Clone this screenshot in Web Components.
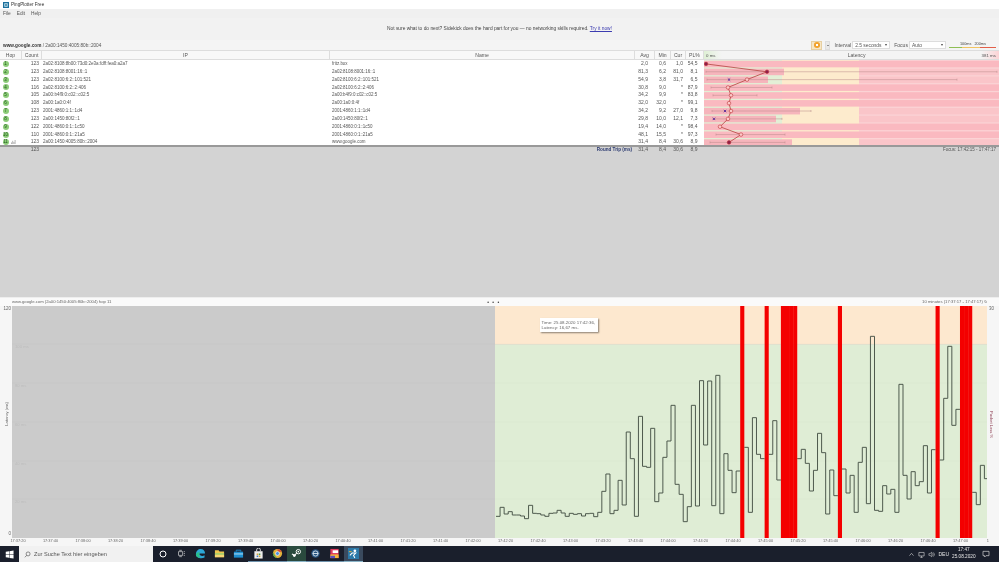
<!DOCTYPE html>
<html lang="en"><head><meta charset="utf-8"><title>PingPlotter Free</title>
<style>html,body{margin:0;padding:0;background:#d3d3d3;overflow:hidden}</style></head>
<body>
<pp-app>
  <pp-titlebar>PingPlotter Free</pp-titlebar>
  <pp-menu></pp-menu>
  <pp-banner>Not sure what to do next? Sidekick does the hard part for you — no networking skills required. <a>Try it now!</a></pp-banner>
  <pp-toolbar></pp-toolbar>
  <pp-table></pp-table>
  <pp-chart></pp-chart>
  <pp-taskbar></pp-taskbar>
</pp-app>
<script>
const FONT='"Liberation Sans",Arial,sans-serif';
class Base extends HTMLElement{
  render(css,html){const s=this.attachShadow({mode:'open'});s.innerHTML=`<style>:host{display:block;box-sizing:border-box;font-family:${FONT}}*{box-sizing:border-box}${css}</style>${html}`;return s;}
}
customElements.define('pp-app',class extends Base{connectedCallback(){this.render(`:host{width:999px;height:562px;display:flex;flex-direction:column;overflow:hidden;filter:blur(.35px)}`,`<slot></slot>`)}});
customElements.define('pp-titlebar',class extends Base{connectedCallback(){this.render(`:host{height:9px;background:#fff;display:flex;align-items:center;gap:2px;padding-left:3px;font-size:4.6px;color:#333}svg{width:6px;height:6px}`,
`<svg viewBox="0 0 12 12"><rect width="12" height="12" fill="#1c6f9c"/><rect x="2.5" y="2.5" width="7" height="7" fill="#bfe3ee"/><rect x="4.5" y="4.5" width="3" height="3" fill="#145a80"/></svg><slot></slot>`)}});
customElements.define('pp-menu',class extends Base{connectedCallback(){this.render(`:host{height:9px;background:#f0f0f0;display:flex;align-items:center;gap:6px;padding-left:3px;font-size:4.8px;color:#555}`,
`<span>File</span><span>Edit</span><span>Help</span>`)}});
customElements.define('pp-banner',class extends Base{connectedCallback(){this.render(`:host{height:22px;background:#f2f2f2;display:flex;align-items:flex-start;justify-content:center;padding-top:7px;font-size:4.85px;line-height:7px;color:#444;white-space:pre}
::slotted(a){color:#3b3bb0;text-decoration:underline}`,`<slot></slot>`)}});
customElements.define('pp-select',class extends Base{connectedCallback(){const w=this.getAttribute('w');this.render(`:host{width:${w}px;height:8.5px;background:#fff;border:.5px solid #ddd;display:flex;align-items:center;justify-content:space-between;padding:0 2px;font-size:4.9px;color:#555}i{border:1.5px solid transparent;border-top:2px solid #444;border-bottom:0}`,`<slot></slot><i></i>`)}});
customElements.define('pp-toolbar',class extends Base{connectedCallback(){this.render(`:host{height:11px;background:#f4f4f4;display:flex;align-items:center;padding-left:3px;font-size:4.7px;color:#555;border-bottom:.5px solid #ddd}
.host{font-weight:700;color:#333}.sp{flex:1}
.pause{width:11px;height:9px;background:#f6e6c6;border:.5px solid #e7cfa0;display:flex;align-items:center;justify-content:center}
.pause b{width:5.5px;height:5.5px;border-radius:50%;background:#f2a32e;display:flex;gap:.6px;align-items:center;justify-content:center}
.pause b i{width:.7px;height:2.5px;background:#fff}
.dd{width:5px;height:9px;margin:0 4px 0 3px;background:#e9e9e9;border:.5px solid #ddd;display:flex;align-items:center;justify-content:center}
.dd i{border:1.2px solid transparent;border-top:1.6px solid #333;border-bottom:0}
.lbl{margin-right:1px;font-size:5.1px}.gap{width:4px}
.legend{width:50px;margin-left:3px;display:flex;flex-direction:column;height:10px;justify-content:center}
.lt{display:flex;font-size:3.8px;line-height:5px;color:#444;padding-left:11px;gap:3px}
.lb{display:flex;height:1.5px;width:47px}.lb i{display:block;height:100%}`,
`<span><span class="host">www.google.com</span> / 2a00:1450:4005:80b::2004</span><span class="sp"></span>
<div class="pause"><b><i></i><i></i></b></div><div class="dd"><i></i></div>
<span class="lbl">Interval</span><pp-select w="38">2.5 seconds</pp-select><span class="gap"></span>
<span class="lbl">Focus</span><pp-select w="37">Auto</pp-select>
<div class="legend"><div class="lt"><span>100ms</span><span>200ms</span></div><div class="lb"><i style="width:13px;background:#8fbf55"></i><i style="width:18px;background:#f2c462"></i><i style="width:16px;background:#e2604a"></i></div></div>`)}});

const ROWS=[
[1,123,'2a02:8108:8b00:73d0:2e3a:fdff:fea0:a2a7','fritz.box','2,0','0,6','1,0','54,5'],
[2,123,'2a02:8108:8001:16::1','2a02:8108:8001:16::1','81,3','6,2','81,0','8,1'],
[3,123,'2a02:8100:6:2::101:521','2a02:8100:6:2::101:521','54,9','3,8','31,7','6,5'],
[4,116,'2a02:8100:6:2::2:406','2a02:8100:6:2::2:406','30,8','9,0','*','87,9'],
[5,105,'2a00:b4f9:0:c02::c02:5','2a00:b4f9:0:c02::c02:5','34,2','9,9','*','83,8'],
[6,108,'2a00:1a0:0:4f','2a00:1a0:0:4f','32,0','32,0','*','99,1'],
[7,123,'2001:4860:1:1::1d4','2001:4860:1:1::1d4','34,2','9,2','27,0','9,8'],
[8,123,'2a00:1450:80f2::1','2a00:1450:80f2::1','29,8','10,0','12,1','7,3'],
[9,122,'2001:4860:0:1::1c50','2001:4860:0:1::1c50','19,4','14,0','*','98,4'],
[10,110,'2001:4860:0:1::21a5','2001:4860:0:1::21a5','48,1','15,5','*','97,3'],
[11,123,'2a00:1450:4005:80b::2004','www.google.com','31,4','8,4','30,6','8,9']];
const LAT=[
{avg:706,cur:706,full:1},
{avg:767,cur:767,bar:784,e:[706,997]},
{avg:747,cur:729,bar:768,e:[707,957]},
{avg:728,full:1,e:[711,772]},
{avg:731,full:1,e:[713,757]},
{avg:729,full:1},
{avg:731,cur:725,bar:800,e:[712,811]},
{avg:728,cur:714,bar:776,e:[713,782]},
{avg:720,full:1},
{avg:741,full:1,e:[716,785]},
{avg:729,cur:728,bar:792,e:[710,785]}];
const RH=7.85;
function latencySvg(){
  let s='';
  const X=x=>x-704;
  s+=`<rect x="0" y="0" width="78" height="87" fill="#e3efd6"/><rect x="78" y="0" width="77" height="87" fill="#fdebcd"/><rect x="155" y="0" width="140" height="87" fill="#fbd3d5"/>`;
  LAT.forEach((r,i)=>{const y=i*RH+.8,h=RH-1.3;
    if(r.full)s+=`<rect x="0" y="${y}" width="295" height="${h}" fill="#fab9c0"/>`;
    else{s+=`<rect x="0" y="${y}" width="${X(r.bar)}" height="${h}" fill="#f6b5bc"/>`;
      s+=`<rect x="155" y="${y}" width="140" height="${h}" fill="#fab9c0" opacity=".55"/>`;}
  });
  LAT.forEach((r,i)=>{if(r.e){const y=i*RH+RH/2;s+=`<path d="M${X(r.e[0])} ${y}H${X(r.e[1])}M${X(r.e[0])} ${y-1}v2M${X(r.e[1])} ${y-1}v2" stroke="#b98a8a" stroke-width=".5" fill="none"/>`}});
  s+=`<polyline fill="none" stroke="#b4423f" stroke-width=".8" points="${LAT.map((r,i)=>X(r.avg)+','+(i*RH+RH/2)).join(' ')}"/>`;
  LAT.forEach((r,i)=>{const y=i*RH+RH/2;
    const dark=(i==0||i==1||i==10);
    s+=`<circle cx="${X(r.avg)}" cy="${y}" r="1.8" fill="${dark?'#8f1f4a':'#fbc8c8'}" stroke="#c0393b" stroke-width=".6"/>`;
    if(r.cur&&!dark)s+=`<path d="M${X(r.cur)-1.2} ${y-1.2}l2.4 2.4M${X(r.cur)+1.2} ${y-1.2}l-2.4 2.4" stroke="#5a2a96" stroke-width=".9"/>`;
  });
  return `<svg class="lat" viewBox="0 0 295 86.35" width="295" height="86.35">${s}</svg>`;
}
customElements.define('pp-table',class extends Base{connectedCallback(){
  const cell=(c,t)=>`<span class="${c}">${t}</span>`;
  const rows=ROWS.map((r,i)=>`<div class="row"><span class="hop"><b>${r[0]}</b>${i==10?'<svg viewBox="0 0 6 5" width="5" height="4"><path d="M.5 5V3M2 5V1M3.5 5V2.5M5 5V0" stroke="#666" stroke-width=".6"/></svg>':''}</span>${cell('cnt r',r[1])}${cell('ip',r[2])}${cell('nm',r[3])}${cell('avg r',r[4])}${cell('min r',r[5])}${cell('cur r',r[6])}${cell('pl r',r[7])}</div>`).join('');
  this.render(`:host{flex:1;display:flex;flex-direction:column;background:#d3d3d3;font-size:5.1px;color:#555;min-height:0}
.hd{display:flex;height:9px;background:#f8f8f8;border-bottom:.5px solid #ddd;color:#555}
.hd>span{display:flex;align-items:center;justify-content:center;border-right:.5px solid #ddd}
.latH{width:295px;background:linear-gradient(90deg,#dff0d5 0,#f4f4f4 6%,#f4f4f4 94%,#fbd3d5 100%);display:flex;align-items:center;justify-content:space-between;font-size:4.4px;padding:0 3px 0 2px}
.latH span:nth-child(2){font-size:5.1px;margin-left:16px}
.body{display:flex;height:86.35px;background:#fff}
.rows{width:704px}
.row{display:flex;height:7.85px;line-height:7.85px;white-space:nowrap;font-size:5px}
.hop{width:22px;display:flex;align-items:center;gap:2px;padding-left:2.5px}
.hop b{width:6px;height:6px;border-radius:50%;background:#8ccb78;color:#1f5a1a;font-weight:400;font-size:4.5px;display:flex;align-items:center;justify-content:center;flex:none}
.cnt{width:20px;padding-right:3px}.ip{width:288px;padding-left:1px;font-size:4.55px}.nm{width:305px;padding-left:2px;font-size:4.45px}
.avg{width:20px;padding-right:7px}.min{width:16px;padding-right:5px}.cur{width:15px;padding-right:3px}.pl{width:18px;padding-right:6.5px}
.r{text-align:right}
.lat{display:block}
.sep{height:1.5px;background:#999;margin-top:-.9px}
.ft{display:flex;height:5.5px;line-height:5.5px;white-space:nowrap;background:#d3d3d3;font-size:5px;align-items:baseline}
.rt{font-weight:700;color:#2b3a70;width:305px;text-align:right;padding-right:3px;font-size:4.6px}
.focus{flex:1;text-align:right;padding-right:3px;font-size:4.45px}
.rest{flex:1;background:#d3d3d3}`,
`<div class="hd"><span style="width:22px">Hop</span><span style="width:20px">Count</span><span style="width:288px">IP</span><span style="width:305px">Name</span><span style="width:20px">Avg</span><span style="width:16px">Min</span><span style="width:15px">Cur</span><span style="width:18px">PL%</span><div class="latH"><span>0 ms</span><span>Latency</span><span>381 ms</span></div></div>
<div class="body"><div class="rows">${rows}</div>${latencySvg()}</div><div class="sep"></div>
<div class="ft"><span class="hop"></span><span class="cnt r">123</span><span class="ip"></span><span class="rt">Round Trip (ms)</span><span class="avg r">31,4</span><span class="min r">8,4</span><span class="cur r">30,6</span><span class="pl r">8,9</span><span class="focus">Focus: 17:42:15 - 17:47:17</span></div>
<div class="rest"></div>`)}});

const V=[664,637,657,650,660,660,663,671,631,655,656,660,664,655,654,646,654,664,655,658,656,663,656,655,665,652,589,537,656,646,556,630,411,491,664,364,514,517,400,620,594,487,438,331,568,598,680,635,331,633,257,450,258,632,241,656,476,526,593,528,
null,457,652,368,478,491,null,478,377,555,null,null,null,null,491,463,505,588,526,415,473,657,525,602,null,522,594,541,652,502,457,626,124,646,649,572,597,583,652,268,541,612,530,572,560,452,594,464,null,495,310,154,391,343,null,null,null,592,629,511,551];
customElements.define('pp-chart',class extends Base{connectedCallback(){
  const PX=x=>+(x-12).toFixed(2), PY=z=>+(295+z/3-306).toFixed(2), STEP=4.07, X0=496;
  let d='',reds='',prev=null;
  V.forEach((v,i)=>{const a=PX(X0+i*STEP),b=PX(X0+(i+1)*STEP);
    if(v===null){reds+=`<rect x="${a}" y="0" width="${STEP+.05}" height="232" fill="#f40000"/>`;prev=null;return;}
    const y=PY(v);
    d+=(prev===null?`M${a} ${y}`:`V${y}`)+`H${b}`;prev=v;
  });
  const grid=[38,77,116,155,193].map(y=>`<path d="M0 ${y}H975" stroke="#000" stroke-opacity=".03" stroke-width=".7"/>`).join('');
  const gl=[[100,40.5],[80,79.5],[60,118.5],[40,157.5],[20,195.5]].map(([t,y])=>`<text x="3" y="${y+1.5}" font-size="4.2" fill="#bdbdbd" font-family='${FONT}'>${t} ms</text>`).join('');
  const labels=[];for(let s=37*60+20;s<=47*60;s+=20){const m=Math.floor(s/60),ss=s%60;labels.push(`17:${m}:${String(ss).padStart(2,'0')}`)}
  this.render(`:host{height:249px;flex:none;display:flex;flex-direction:column;background:#f6f6f6;font-size:4.2px;color:#666;border-top:1px solid #eee}
.head{height:8px;display:flex;justify-content:space-between;align-items:center;padding:0 12px 0 12px;background:#fafafa;white-space:nowrap;line-height:8px}
.dots{letter-spacing:1px;color:#444;font-weight:700;font-size:5px;margin-left:-46px}
.mid{height:232px;display:flex}
.gut{width:12px;display:flex;flex-direction:column;justify-content:space-between;align-items:flex-end;padding-right:1px;font-size:4.5px}
.gut.r{align-items:flex-start;padding:0 0 0 2px;flex:1}
.v{writing-mode:vertical-rl;transform:rotate(180deg);font-size:4.1px;margin-right:2px;margin-bottom:14px}
.v.pk{transform:none;color:#8c3b50;margin:0}
.plot{width:975px;position:relative;border-left:1.5px solid #aaa;height:232px}
svg{display:block;position:absolute;left:-1.5px;top:0}
.tip{position:absolute;left:527px;top:12px;width:58px;height:14px;background:#fff;box-shadow:1px 1px 1.5px rgba(0,0,0,.45);font-size:4.4px;line-height:5.4px;padding:1.5px 1.5px;color:#666;white-space:nowrap}
.axis{height:8px;display:flex;padding-left:1.75px;white-space:nowrap;line-height:5px;font-size:3.9px;background:#f6f6f6}
.axis span{width:32.5px;text-align:center;flex:none}
.axis .end{width:auto;padding-left:10px}`,
`<div class="head"><span>www.google.com (2a00:1450:4005:80b::2004) hop 11</span><span class="dots">• • •</span><span>10 minutes (17:37:17 - 17:47:17) ↻</span></div>
<div class="mid"><div class="gut"><span>120</span><span class="v">Latency (ms)</span><span style="margin-bottom:2px">0</span></div>
<div class="plot"><svg viewBox="0 0 975 232" width="975" height="232">
<rect width="975" height="232" fill="#cbcbcb"/><rect x="483" width="492" height="38.5" fill="#fde8cf"/><rect x="483" y="38.5" width="492" height="193.5" fill="#dfedd5"/>
${grid}${gl}<path d="${d}" fill="none" stroke="#475247" stroke-width=".95"/>${reds}</svg>
<div class="tip">Time: 25.08.2020 17:42:36,<br>Latency: 16,67 ms.</div></div>
<div class="gut r"><span>30</span><span class="v pk">Packet Loss %</span><span></span></div></div>
<div class="axis">${labels.map(l=>`<span>${l}</span>`).join('')}<span class="end">1</span></div>`)}});

customElements.define('pp-taskbar',class extends Base{connectedCallback(){
  const ic=(svg,cls='')=>`<div class="c ${cls}">${svg}</div>`;
  const S=(b,w=11)=>`<svg viewBox="0 0 12 12" width="${w}" height="${w}">${b}</svg>`;
  this.render(`:host{height:16px;flex:none;background:#1a1f2c;display:flex;align-items:stretch;color:#e6e6e6;font-size:5px}
.win{width:19px;display:flex;align-items:center;justify-content:center}
.search{width:134px;background:#f1f1f1;color:#555;display:flex;align-items:center;gap:3px;padding-left:5px;font-size:5.6px;white-space:nowrap}
.c{width:19.1px;display:flex;align-items:center;justify-content:center;flex:none;border-bottom:1px solid transparent}
.steam{background:#2a4a3e;border-bottom-color:#8ab4c8}.act{background:#3a4a5e;border-bottom-color:#8ab4c8}
.und{border-bottom-color:#6f93ad}
.sp{flex:1}
.tray{display:flex;align-items:center;gap:3px;padding-right:9px}
.clock{text-align:center;line-height:6.6px;font-size:4.7px;margin-right:3.5px}`,
`<div class="win">${S('<path fill="#fff" d="M1 2.2l4.4-.6v4H1zM6 1.5l5.4-.8v5H6zM1 6.3h4.4v4L1 9.7zM6 6.3h5.4v5L6 10.5z"/>',9)}</div>
<div class="search">${S('<circle cx="7" cy="5" r="3.4" fill="none" stroke="#444" stroke-width="1"/><path d="M4.6 7.4L1.5 10.8" stroke="#444" stroke-width="1"/>',7)}<span>Zur Suche Text hier eingeben</span></div>
${ic(S('<circle cx="6" cy="6" r="3.6" fill="none" stroke="#fff" stroke-width="1.2"/>',10))}
${ic(S('<path d="M2 3.5h5.5v5H2zM9 3.5h1.5M9 6h1.5M9 8.5h1.5M3 1.8h3.5M3 10.2h3.5" fill="none" stroke="#ddd" stroke-width=".9"/>',9))}
${ic(S('<path d="M1 7C1 3 3.5 1 6.2 1 9 1 11 3 11 6H4.6c.2 2.4 3.4 3.3 5.8 2v2.4C7 12 1 11 1 7z" fill="#2da8d8"/><path d="M1 7c.8-2 3-3 4.5-1.8C4.4 6 4 8.5 6 10.5 3 10.8 1 9 1 7z" fill="#2bc08a"/>',11))}
${ic(S('<path d="M1 2.5h4l1 1.3h5V10H1z" fill="#eec54e"/><rect x="1" y="5.5" width="10" height="2" fill="#a8cf6a"/><rect x="1" y="7.5" width="10" height="2.5" fill="#f7d673"/>',11))}
${ic(S('<path d="M1 4h10v6.5H1z" fill="#1f8fd0"/><path d="M3.5 4V2.4h5V4" fill="none" stroke="#1f8fd0"/><rect x="1" y="6" width="10" height="1" fill="#bfe3f5"/>',11))}
${ic(S('<path d="M1.5 3.5h9v8h-9z" fill="#eee"/><path d="M4 3.5V2a2 2 0 0 1 4 0v1.5" fill="none" stroke="#eee"/><rect x="4" y="6" width="1.7" height="1.7" fill="#d9a13a"/><rect x="6.3" y="6" width="1.7" height="1.7" fill="#4a9c4a"/><rect x="4" y="8.2" width="1.7" height="1.7" fill="#3a7cc9"/><rect x="6.3" y="8.2" width="1.7" height="1.7" fill="#d9a13a"/>',11),'und')}
${ic(S('<circle cx="6" cy="6" r="5" fill="#e3b23c"/><path d="M6 1a5 5 0 0 1 4.6 3H6z" fill="#d9463a"/><path d="M1.2 4.5L3.6 9l2 2a5 5 0 0 1-4.4-6.5z" fill="#4da64d"/><circle cx="6" cy="6" r="2.1" fill="#4a8fe0" stroke="#fff" stroke-width=".7"/>',11),'und')}
${ic(S('<circle cx="8" cy="4" r="2.4" fill="none" stroke="#fff" stroke-width="1"/><circle cx="8" cy="4" r=".9" fill="#fff"/><path d="M1 6.5l3.3 1.6L6.4 5" stroke="#fff" stroke-width="1.1" fill="none"/><circle cx="3.6" cy="8.2" r="1.5" fill="#fff"/>',11),'steam')}
${ic(S('<circle cx="6" cy="6" r="4.6" fill="#24517e"/><circle cx="6" cy="6" r="2.8" fill="none" stroke="#d6e4ef" stroke-width="1"/><path d="M3 6h6" stroke="#d6e4ef"/>',11),'und')}
${ic(S('<rect x="1.5" y="1" width="9" height="10" fill="#e03a5d"/><rect x="1.5" y="7" width="9" height="4" fill="#f5b83a"/><rect x="4" y="2.5" width="6" height="3" fill="#fff"/><rect x="1.5" y="8.5" width="5" height="2.5" fill="#5a4fbf"/>',11),'und')}
${ic(S('<rect width="12" height="12" fill="#2b79a8"/><circle cx="7.5" cy="3" r="1.5" fill="#fff"/><path d="M2 8l2.5-2.5h4L6 8l1.5 3" stroke="#fff" stroke-width="1.1" fill="none"/><path d="M1 4h3" stroke="#f2b134"/>',11),'act')}
<div class="sp"></div>
<div class="tray">
${S('<path d="M2.5 8L6 4l3.5 4" fill="none" stroke="#ddd" stroke-width="1"/>',7)}
${S('<path d="M1.5 2.5h9v6h-9zM4 11h4M6 8.5V11" fill="none" stroke="#ddd" stroke-width="1"/>',7)}
${S('<path d="M1.5 4.5h2L6.5 2v8L3.5 7.5h-2zM8 4a3 3 0 0 1 0 4M9.5 2.5a5 5 0 0 1 0 7" fill="none" stroke="#ddd" stroke-width=".9"/>',7)}
<span>DEU</span><div class="clock">17:47<br>25.08.2020</div>
${S('<path d="M1.5 2h9v6.5H6L4 10.5V8.5H1.5z" fill="none" stroke="#ddd" stroke-width="1"/>',8)}
</div>`)}});
</script>
</body></html>
